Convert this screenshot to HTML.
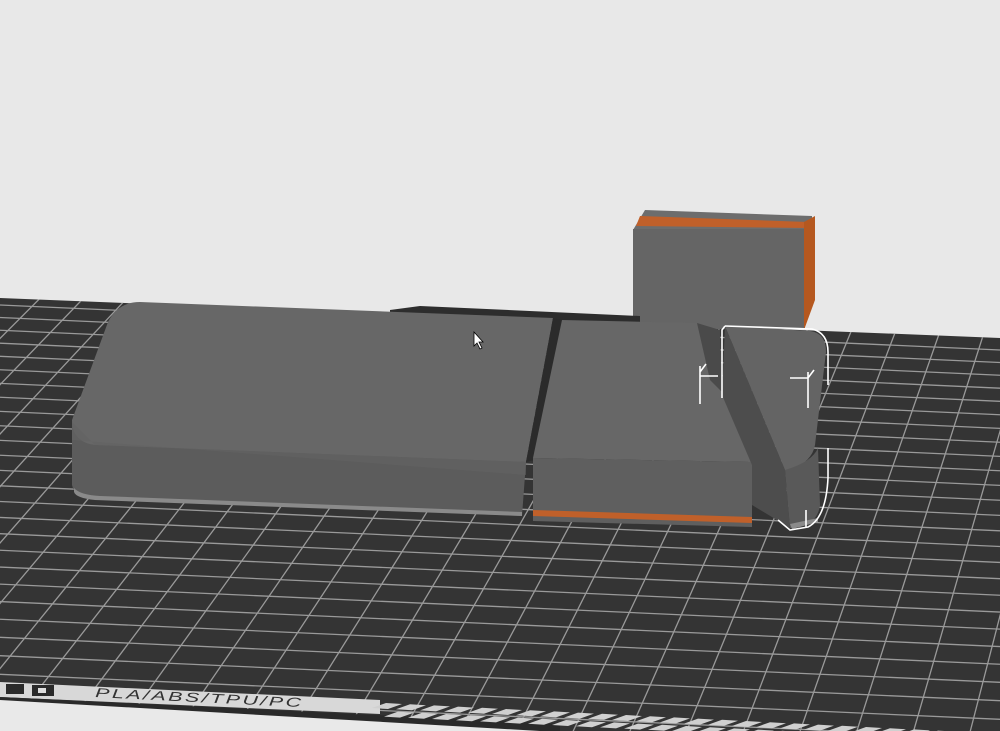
<!DOCTYPE html>
<html><head><meta charset="utf-8"><style>
html,body{margin:0;padding:0;background:#e8e8e8;overflow:hidden;width:1000px;height:731px}
svg{display:block}
</style></head><body>
<svg id="s" width="1000" height="731" viewBox="0 0 1000 731" xmlns="http://www.w3.org/2000/svg">
<defs>
<clipPath id="bed"><polygon points="0,298 1000,338 1000,731 0,731"/></clipPath>
</defs>
<rect width="1000" height="731" fill="#e8e8e8"/>
<polygon points="0,298 1000,338 1000,731 560,731 0,700" fill="#343434"/>
<g id="grid" clip-path="url(#bed)" stroke="#9a9a9a" stroke-width="1.3" fill="none"></g>
<polygon points="0,682 380,700 380,714 0,697" fill="#d8d8d8"/>
<polygon points="0,697 560,724 560,731 0,731" fill="#2a2a2a"/>
<polygon points="0,700 540,731 0,731" fill="#e9e9e9"/>
<g fill="#d0d0d0" id="hatch"></g>
<g transform="rotate(2.8 95 697)"><text x="0" y="0" font-family="Liberation Sans, sans-serif" font-size="13" fill="#333" font-style="italic" letter-spacing="1.5" transform="translate(95 697) scale(1.65 1)">PLA/ABS/TPU/PC</text></g>
<rect x="6" y="684" width="18" height="10" fill="#2a2a2a"/>
<rect x="32" y="685" width="22" height="11" fill="#2a2a2a"/>
<rect x="38" y="688" width="8" height="5" fill="#ddd"/>

<polygon points="645,210 812,216 812,230 633,230" fill="#6d6d6d"/>
<polygon points="640,216 808,222 808,228 636,226" fill="#c0602a"/>
<rect x="633" y="229" width="172" height="100" fill="#656565"/>
<polygon points="804,222 815,216 815,300 804,330" fill="#b5581f"/>
<polygon points="390,310 420,306 640,316 640,330 390,320" fill="#2d2d2d"/>
<path d="M72,422 L72,485 Q74,497 95,498 L522,516 L526,462 Z" fill="#5c5c5c"/>
<path d="M74,488 Q80,495 100,496 L522,512 L522,516 L95,500 Q76,498 74,492Z" fill="#8a8a8a"/>
<path d="M140,302 L553,318 L526,462 L95,445 Q72,442 72,420 L108,322 Q118,302 140,302 Z" fill="#676767"/>
<polygon points="72,422 95,445 526,462 526,475 72,440" fill="#636363" opacity=".6"/>
<polygon points="553,318 562,320 535,460 526,462" fill="#2b2b2b"/>
<polygon points="562,320 697,323 752,462 533,458" fill="#676767"/>
<polygon points="533,458 752,462 752,527 533,521" fill="#5f5f5f"/>
<polygon points="533,510 752,517 752,523 533,516" fill="#c0602a"/>
<polygon points="697,323 720,330 722,392 710,380" fill="#4a4a4a"/>
<polygon points="725,326 785,470 790,528 752,505 752,465 722,395" fill="#4d4d4d"/>
<path d="M725,326 L810,331 Q826,333 826,352 L815,445 Q812,462 790,470 L785,470 Z" fill="#646464"/>
<path d="M785,470 Q812,462 818,448 L820,505 Q818,522 800,527 L790,528 Z" fill="#595959"/>
<path d="M790,524 L818,518 L818,522 L792,529Z" fill="#8a8a8a"/>
<g stroke="#fff" stroke-width="1.6" fill="none">
<path d="M725,326 L812,329 Q828,333 828,352 L828,385"/>
<path d="M725,326 L722,330 L722,398"/>
<path d="M828,448 L828,478 Q826,518 808,527 L790,530 L778,520"/>
<path d="M700,366 L700,404 M700,376 L718,376 M700,372 L706,364"/>
<path d="M808,372 L808,408 M790,378 L808,378 L814,370"/>
<path d="M806,510 L806,528"/>
</g>
<path d="M474,332 L474,346 L477,343 L480,349 L482,348 L479,342 L483,342 Z" fill="#fff" stroke="#000" stroke-width=".8"/>
</svg>
<script>
var ns="http://www.w3.org/2000/svg",g=document.getElementById('grid');
function ln(x1,y1,x2,y2){var l=document.createElementNS(ns,'line');l.setAttribute('x1',x1);l.setAttribute('y1',y1);l.setAttribute('x2',x2);l.setAttribute('y2',y2);g.appendChild(l);}
var y=305,s=12.5;
for(var i=0;i<40&&y<740;i++){ln(0,y,1000,y+45);y+=s;s*=1.0176;}
var vx=1445,vy=-1112;
for(var x=-400;x<1200;x+=57){ln(x,740,vx+(x-vx)*0.05,vy+(740-vy)*0.05);}
var h=document.getElementById('hatch');
for(var row=0;row<2;row++){
for(var k=0;k<24;k++){var x0=372+k*24+row*12,y0=703+row*8+(k*24+row*12)*0.05;var p=document.createElementNS(ns,'polygon');
p.setAttribute('points',(x0)+','+(y0+5)+' '+(x0+14)+','+(y0)+' '+(x0+30)+','+(y0+1)+' '+(x0+16)+','+(y0+6));h.appendChild(p);}}
</script>
</body></html>
